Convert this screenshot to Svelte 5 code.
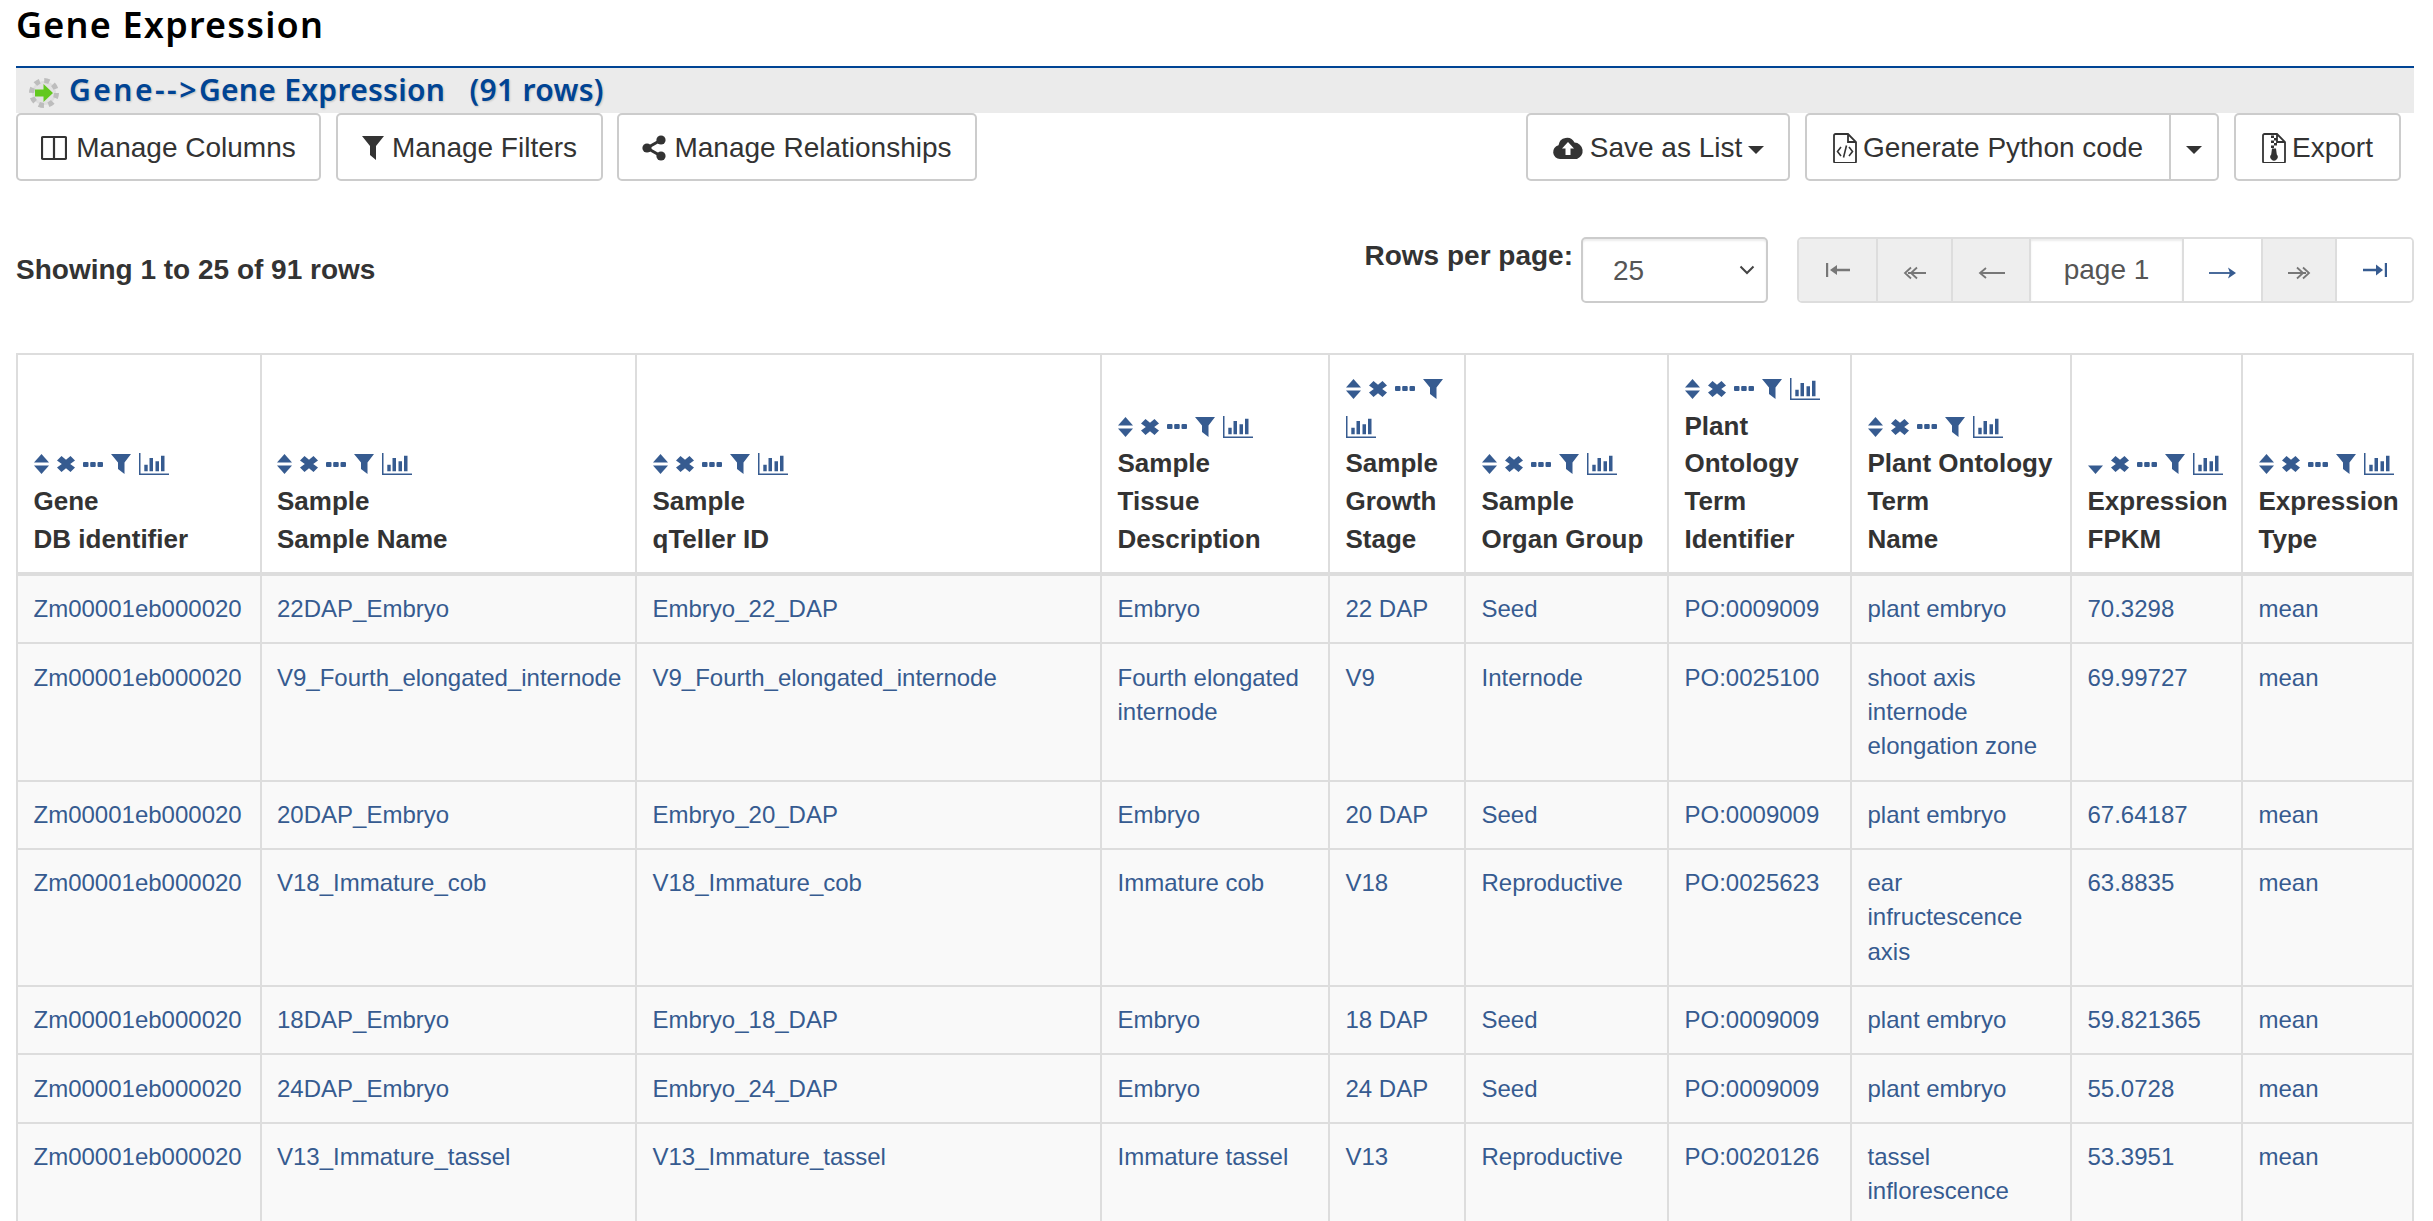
<script>
  const columns = [
    { w: 243.5, lines: ["Gene", "DB identifier"], sorted: false },
    { w: 375.5, lines: ["Sample", "Sample Name"], sorted: false },
    { w: 465, lines: ["Sample", "qTeller ID"], sorted: false },
    { w: 228, lines: ["Sample", "Tissue", "Description"], sorted: false },
    { w: 136, lines: ["Sample", "Growth", "Stage"], sorted: false },
    { w: 203, lines: ["Sample", "Organ Group"], sorted: false },
    { w: 183, lines: ["Plant", "Ontology", "Term", "Identifier"], sorted: false },
    { w: 220, lines: ["Plant Ontology", "Term", "Name"], sorted: false },
    { w: 171, lines: ["Expression", "FPKM"], sorted: true },
    { w: 171, lines: ["Expression", "Type"], sorted: false }
  ];

  const gene = "Zm00001eb000020";
  const rows = [
    [gene, "22DAP_Embryo", "Embryo_22_DAP", "Embryo", "22 DAP", "Seed", "PO:0009009", "plant embryo", "70.3298", "mean"],
    [gene, "V9_Fourth_elongated_internode", "V9_Fourth_elongated_internode", "Fourth elongated internode", "V9", "Internode", "PO:0025100", "shoot axis internode elongation zone", "69.99727", "mean"],
    [gene, "20DAP_Embryo", "Embryo_20_DAP", "Embryo", "20 DAP", "Seed", "PO:0009009", "plant embryo", "67.64187", "mean"],
    [gene, "V18_Immature_cob", "V18_Immature_cob", "Immature cob", "V18", "Reproductive", "PO:0025623", "ear infructescence axis", "63.8835", "mean"],
    [gene, "18DAP_Embryo", "Embryo_18_DAP", "Embryo", "18 DAP", "Seed", "PO:0009009", "plant embryo", "59.821365", "mean"],
    [gene, "24DAP_Embryo", "Embryo_24_DAP", "Embryo", "24 DAP", "Seed", "PO:0009009", "plant embryo", "55.0728", "mean"],
    [gene, "V13_Immature_tassel", "V13_Immature_tassel", "Immature tassel", "V13", "Reproductive", "PO:0020126", "tassel inflorescence", "53.3951", "mean"]
  ];
</script>

<div class="page">
  <h1 class="title">Gene Expression</h1>

  <div class="crumb">
    <svg class="gear" viewBox="0 0 32 32" width="32" height="32">
      <circle cx="16" cy="16" r="12" fill="#dedede" stroke="#bdbdbd" stroke-width="6" stroke-dasharray="5 4.400" />
      <circle cx="16" cy="16" r="10" fill="#e2e2e2" />
      <path d="M7 12.500h8.500V7l9.500 9-9.500 9v-5.500H7z" fill="#62c81e" />
    </svg>
    <span><span class="arrow">Gene--&gt;</span>Gene Expression   (91 rows)</span>
  </div>

  <div class="toolbar">
    <button class="btn b-cols">
      <svg viewBox="0 0 26 32" width="26" height="32"><path d="M2 5h22a1 1 0 0 1 1 1v20a1 1 0 0 1-1 1H2a1 1 0 0 1-1-1V6a1 1 0 0 1 1-1zM13 5v22" fill="none" stroke="#333" stroke-width="2.200" /></svg>
      Manage Columns
    </button>
    <button class="btn b-filters">
      <svg viewBox="0 0 22 26" width="22" height="26"><path d="M0 1h22l-8 10v14l-6-5V11z" fill="#333" /></svg>
      Manage Filters
    </button>
    <button class="btn b-rel">
      <svg viewBox="0 0 24 26" width="24" height="26"><path d="M19 5L5 13l14 8" fill="none" stroke="#333" stroke-width="3" /><circle cx="19" cy="5" r="4.600" fill="#333" /><circle cx="5" cy="13" r="4.600" fill="#333" /><circle cx="19" cy="21" r="4.600" fill="#333" /></svg>
      Manage Relationships
    </button>

    <div class="spacer"></div>

    <button class="btn b-save">
      <svg viewBox="0 0 32 26" width="32" height="26"><path d="M8 24a7 7 0 0 1-1.500-13.800A8.500 8.500 0 0 1 22.500 7.500 8.500 8.500 0 0 1 25 24z" fill="#333" /><path d="M16 7l6 6.500h-3.500V20h-5v-6.500H10z" fill="#fff" /></svg>
      Save as List
      <i class="caret"></i>
    </button>

    <div class="split">
      <button class="btn b-py">
        <svg viewBox="0 0 24 30" width="24" height="30"><path d="M1 2.500A1.500 1.500 0 0 1 2.500 1H15l8 8v19.500a1.500 1.500 0 0 1-1.500 1.500h-19A1.500 1.500 0 0 1 1 28.500zM15 1v8h8" fill="none" stroke="#333" stroke-width="1.800" /><path d="M8 14l-3.500 4.500L8 23M16 14l3.500 4.500L16 23M13.500 12.500l-3 12" fill="none" stroke="#333" stroke-width="1.600" /></svg>
        Generate Python code
      </button>
      <button class="btn b-more"><i class="caret"></i></button>
    </div>

    <button class="btn b-export">
      <svg viewBox="0 0 24 30" width="24" height="30"><path d="M1 2.500A1.500 1.500 0 0 1 2.500 1H15l8 8v19.500a1.500 1.500 0 0 1-1.500 1.500h-19A1.500 1.500 0 0 1 1 28.500zM15 1v8h8" fill="none" stroke="#333" stroke-width="1.800" /><path d="M9 2.500h3V5H9zM12 5h3v2.500h-3zM9 7.500h3V10H9zM12 10h3v2.500h-3zM9 12.500h3V15H9z" fill="#333" /><path d="M10 15.500h4l.8 6a3.700 3.700 0 1 1-5.600 0z" fill="#333" /></svg>
      Export
    </button>
  </div>

  <div class="pager-row">
    <div class="showing">Showing 1 to 25 of 91 rows</div>
    <div class="spacer"></div>
    <div class="per-label">Rows per page:</div>
    <div class="select-wrap">
      <select class="per-select">
        <option>25</option>
      </select>
      <svg class="chev" viewBox="0 0 16 10" width="16" height="10"><path d="M1.500 1.500L8 8l6.500-6.500" fill="none" stroke="#444" stroke-width="2" /></svg>
    </div>

    <div class="pager">
      <div class="cell off w77">
        <svg class="up" viewBox="0 0 24 14" width="24" height="14"><path d="M1 0v14M7 7h17" stroke="#777" stroke-width="2.400" fill="none" /><path d="M4 7l7-5v10z" fill="#777" /></svg>
      </div>
      <div class="cell off w75">
        <svg viewBox="0 0 23 14" width="23" height="14"><path d="M5 7h18" stroke="#777" stroke-width="2" /><path d="M8 1.500L2 7l6 5.500M14 1.500L8 7l6 5.500" fill="none" stroke="#777" stroke-width="1.800" /></svg>
      </div>
      <div class="cell off w78">
        <svg viewBox="0 0 27 14" width="27" height="14"><path d="M2 7h25" stroke="#777" stroke-width="2" /><path d="M8 2L2 7l6 5" fill="none" stroke="#777" stroke-width="1.800" /></svg>
      </div>
      <div class="cell current">page 1</div>
      <div class="cell w79">
        <svg viewBox="0 0 27 14" width="27" height="14"><path d="M0 7h24" stroke="#365b90" stroke-width="1.800" /><path d="M19 1.500L27 7l-8 5.500 2-5.500z" fill="#365b90" /></svg>
      </div>
      <div class="cell off w74">
        <svg viewBox="0 0 23 14" width="23" height="14"><path d="M0 7h18" stroke="#777" stroke-width="2" /><path d="M9 1.500L15 7l-6 5.500M15 1.500L21 7l-6 5.500" fill="none" stroke="#777" stroke-width="1.800" /></svg>
      </div>
      <div class="cell w77">
        <svg class="up" viewBox="0 0 24 14" width="24" height="14"><path d="M0 7h17M23 0v14" stroke="#365b90" stroke-width="2.400" fill="none" /><path d="M20 7l-7-5.500v11z" fill="#365b90" /></svg>
      </div>
    </div>
  </div>

  <table class="grid">
    <colgroup>
      {#each columns as c}
        <col style="width: {c.w}px" />
      {/each}
    </colgroup>
    <thead>
      <tr>
        {#each columns as c}
          <th>
            <div class="tools">
              <svg viewBox="0 0 15 20" width="15" height="20">
                {#if !c.sorted}<path d="M7.500 0L15 8.500H0z" />{/if}
                <path d="M0 11.500h15L7.500 20z" />
              </svg>
              <svg viewBox="0 0 18 16" width="18" height="16"><path d="M0 4.500L4.500 0 9 3.800 13.500 0 18 4.500 13.200 8 18 11.500 13.500 16 9 12.200 4.500 16 0 11.500 4.800 8z" /></svg>
              <svg viewBox="0 0 20 5" width="20" height="5"><rect width="5.500" height="5" rx="1" /><rect x="7.200" width="5.500" height="5" rx="1" /><rect x="14.500" width="5.500" height="5" rx="1" /></svg>
              <svg viewBox="0 0 20 20" width="20" height="20"><path d="M0 0h20l-6.500 8.500V20L7 15V8.500z" /></svg>
              <svg viewBox="0 0 30 22" width="30" height="22"><path d="M0 0h1.500v20.500H30V22H0zM5.300 11.700h3.400v6.600H5.300zM10.500 5H14v13.300h-3.500zM16.500 8.300H20v10h-3.500zM22 2.700h3.500v15.600H22z" /></svg>
            </div>
            {#each c.lines as line}
              <div>{line}</div>
            {/each}
          </th>
        {/each}
      </tr>
    </thead>
    <tbody>
      {#each rows as row}
        <tr>
          {#each row as value}
            <td>{value}</td>
          {/each}
        </tr>
      {/each}
    </tbody>
  </table>
</div>

<style>
  :global(body) {
    margin: 0;
    background: #fff;
  }

  .page {
    height: 1221px;
    overflow: hidden;
    padding: 0 19px 0 16px;
    box-sizing: border-box;
    font-family: "Liberation Sans", Arial, sans-serif;
    color: #333;
  }

  .title {
    margin: 0;
    height: 66px;
    box-sizing: border-box;
    padding-top: 2px;
    font-family: "Noto Sans", "Open Sans", sans-serif;
    font-size: 36px;
    line-height: 46px;
    font-weight: 600;
    letter-spacing: 1.200px;
    color: #000;
  }

  .crumb {
    height: 47px;
    box-sizing: border-box;
    border-top: 2px solid #004494;
    background: #ebebeb;
    display: flex;
    align-items: center;
    gap: 9px;
    padding: 0 0 3px 12px;
    font-family: "Noto Sans", "Open Sans", sans-serif;
    font-size: 30px;
    font-weight: 600;
    letter-spacing: 0.300px;
    color: #004494;
    white-space: pre;
    text-shadow: 1px 1px 2px rgba(0, 0, 0, 0.18);
  }

  .arrow {
    letter-spacing: 2.500px;
  }

  .gear {
    flex: none;
    margin-top: 7px;
    filter: blur(0.5px);
  }

  .toolbar {
    display: flex;
    height: 68px;
  }

  .spacer {
    flex: 1;
  }

  .btn {
    box-sizing: border-box;
    height: 68px;
    display: flex;
    align-items: center;
    justify-content: center;
    gap: 6px;
    padding: 2px 0 0;
    background: #fff;
    border: 2px solid #ccc;
    border-radius: 5px;
    font-family: inherit;
    font-size: 28px;
    color: #333;
    white-space: nowrap;
  }

  .b-cols { width: 305px; margin-right: 15px; gap: 9px; }
  .b-filters { width: 267px; margin-right: 14px; gap: 8px; }
  .b-rel { width: 360px; gap: 8px; }
  .b-save { width: 264px; margin-right: 15px; }
  .b-export { width: 167px; margin-left: 15px; margin-right: 13px; }

  .split {
    display: flex;
  }

  .b-py {
    width: 366px;
    border-radius: 5px 0 0 5px;
  }

  .b-more {
    width: 48px;
    border-left: 0;
    border-radius: 0 5px 5px 0;
  }

  .caret {
    display: inline-block;
    border-top: 8px solid #333;
    border-left: 8px solid transparent;
    border-right: 8px solid transparent;
    margin-top: 3px;
  }

  .pager-row {
    display: flex;
    height: 66px;
    margin-top: 56px;
  }

  .showing {
    font-size: 28px;
    font-weight: 700;
    line-height: 66px;
  }

  .per-label {
    font-size: 28px;
    font-weight: 700;
    line-height: 38px;
    margin-right: 8px;
  }

  .select-wrap {
    position: relative;
    width: 187px;
    margin-right: 29px;
  }

  .per-select {
    appearance: none;
    width: 100%;
    height: 66px;
    box-sizing: border-box;
    padding: 0 0 0 30px;
    background: #fff;
    border: 2px solid #ccc;
    border-radius: 5px;
    box-shadow: inset 0 2px 2px rgba(0, 0, 0, 0.08);
    font-family: inherit;
    font-size: 28px;
    color: #555;
  }

  .chev {
    position: absolute;
    right: 13px;
    top: 28px;
  }

  .pager {
    display: flex;
    height: 66px;
    box-sizing: border-box;
    border: 2px solid #ddd;
    border-radius: 5px;
    overflow: hidden;
  }

  .cell {
    box-sizing: border-box;
    border-left: 2px solid #ddd;
    display: flex;
    align-items: center;
    justify-content: center;
    background: #fff;
  }

  .cell:first-child {
    border-left: 0;
  }

  .cell svg {
    margin-top: 6px;
  }

  .cell svg.up {
    margin-top: 0;
  }

  .off { background: #eee; }
  .w74 { width: 74px; }
  .w75 { width: 75px; }
  .w77 { width: 77px; }
  .w78 { width: 78px; }
  .w79 { width: 79px; }

  .current {
    width: 153px;
    font-size: 28px;
    color: #555;
    box-shadow: inset 0 2px 2px rgba(0, 0, 0, 0.08);
  }

  .grid {
    margin-top: 50px;
    width: 2396px;
    table-layout: fixed;
    border-collapse: collapse;
  }

  th,
  td {
    border: 2px solid #ddd;
    padding: 16px 16px 16px 15.500px;
    text-align: left;
  }

  th {
    vertical-align: bottom;
    border-bottom-width: 4px;
    padding-top: 15px;
    padding-bottom: 13.500px;
    font-size: 26px;
    line-height: 37.700px;
    font-weight: 700;
    color: #333;
    white-space: nowrap;
  }

  .tools {
    display: flex;
    flex-wrap: wrap;
    align-items: center;
    column-gap: 8px;
    fill: #365b90;
  }

  .tools svg {
    margin: 8.850px 0;
  }

  .tools svg:nth-child(2) { margin: 10.850px 0; }
  .tools svg:nth-child(3) { margin: 16.350px 0; }
  .tools svg:nth-child(5) { margin: 7.850px 0; }

  td {
    vertical-align: top;
    background: #f9f9f9;
    padding-top: 16.100px;
    padding-bottom: 16.100px;
    font-size: 24px;
    line-height: 34.280px;
    color: #365b90;
  }
</style>
